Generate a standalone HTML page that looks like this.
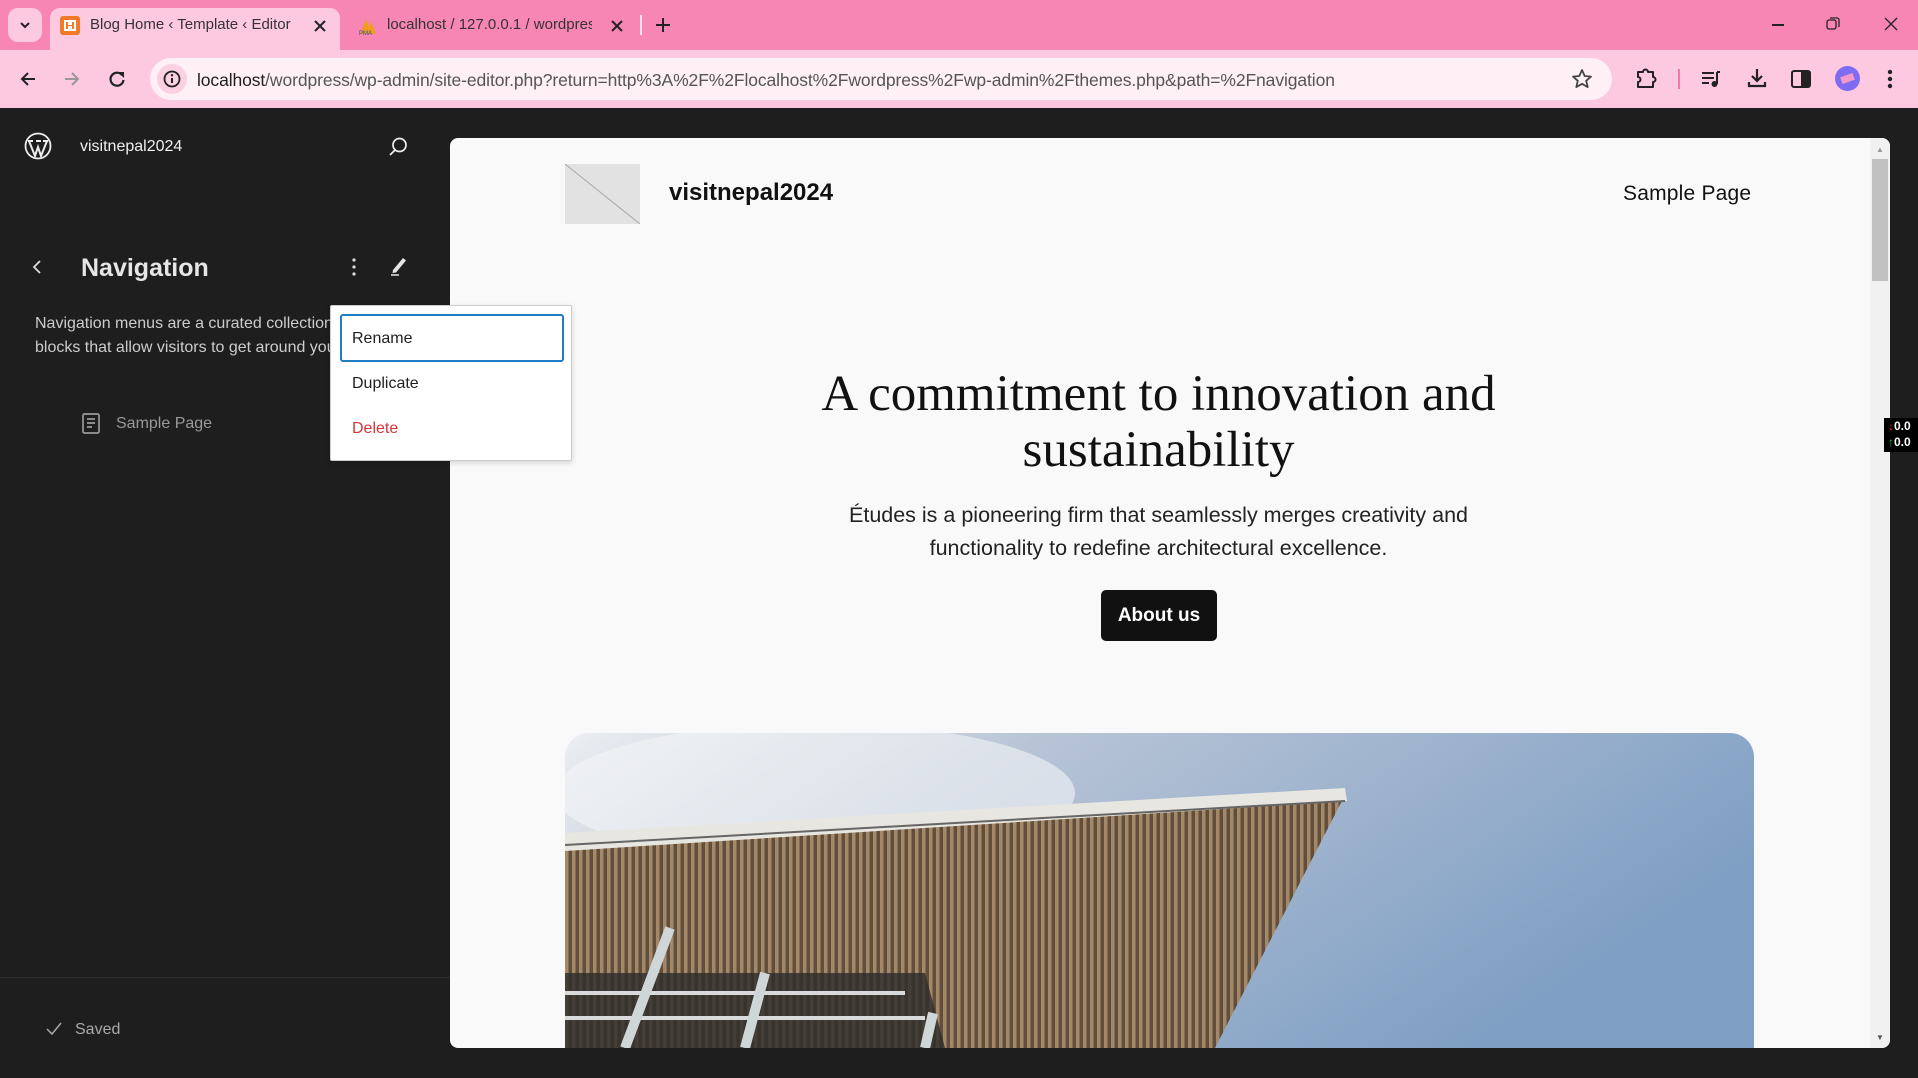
<!DOCTYPE html>
<html><head><meta charset="utf-8"><style>
*{margin:0;padding:0;box-sizing:border-box}
body{width:1918px;height:1078px;overflow:hidden;background:#1e1e1e;font-family:"Liberation Sans",sans-serif;position:relative}
.abs{position:absolute}
#strip{left:0;top:0;width:1918px;height:50px;background:#f886b5}
#toolbar{left:0;top:50px;width:1918px;height:58px;background:#fdc9e1}
.tab{top:8px;height:42px;background:#fdc9e1;border-radius:10px 10px 0 0}
.tabt{font-size:15px;color:#333;white-space:nowrap;overflow:hidden}
#addr{left:150px;top:58px;width:1462px;height:42px;background:#fff0f6;border-radius:21px}
.side{color:#e0e0e0}
#popup{left:330px;top:305px;width:242px;height:156px;background:#fff;border:1px solid #ccc;border-radius:2px;box-shadow:0 2px 6px rgba(0,0,0,.15)}
.pi{position:absolute;left:21px;font-size:16px;color:#1e1e1e}
#frame{left:450px;top:138px;width:1440px;height:910px;background:#f9f9f9;border-radius:8px;overflow:hidden}
</style></head><body>
<div id="strip" class="abs"></div>
<div class="abs" style="left:8px;top:8px;width:34px;height:34px;background:#fdc9e1;border-radius:10px"></div>
<svg class="abs" style="left:18px;top:19px" width="14" height="12"><path d="M3 4l4 4 4-4" stroke="#222" stroke-width="2" fill="none"/></svg>
<div class="abs tab" style="left:50px;width:290px"></div>
<div class="abs" style="left:60px;top:16px;width:20px;height:19px;background:#f07a2a;border-radius:3px"></div>
<svg class="abs" style="left:60px;top:16px" width="20" height="19"><path d="M5 5h4v3h2V5h4v9h-4v-3H9v3H5z" fill="none" stroke="#fff" stroke-width="2"/></svg>
<div class="abs tabt" style="left:90px;top:16px;width:205px;color:#333">Blog Home ‹ Template ‹ Editor ‹</div>
<svg class="abs" style="left:313px;top:19px" width="14" height="14"><path d="M2 2l10 10M12 2L2 12" stroke="#222" stroke-width="2"/></svg>
<svg class="abs" style="left:358px;top:16px" width="20" height="20"><path d="M2 18L8 3l3 8 2-6 5 13z" fill="#f29c1f"/><text x="1" y="19" font-size="6" fill="#2a4c9c" font-family="Liberation Sans">PMA</text></svg>
<div class="abs tabt" style="left:387px;top:16px;width:205px;color:#333">localhost / 127.0.0.1 / wordpress</div>
<svg class="abs" style="left:610px;top:19px" width="14" height="14"><path d="M2 2l10 10M12 2L2 12" stroke="#222" stroke-width="2"/></svg>
<div class="abs" style="left:640px;top:15px;width:2px;height:20px;background:#fde0ec"></div>
<svg class="abs" style="left:654px;top:16px" width="18" height="18"><path d="M9 2v14M2 9h14" stroke="#222" stroke-width="2"/></svg>
<div class="abs" style="left:1772px;top:24px;width:12px;height:1.5px;background:#222"></div>
<svg class="abs" style="left:1826px;top:17px" width="14" height="14"><rect x="1" y="3" width="9" height="9" rx="2" fill="none" stroke="#222" stroke-width="1.3"/><path d="M4 1h7a2 2 0 0 1 2 2v7" fill="none" stroke="#222" stroke-width="1.3"/></svg>
<svg class="abs" style="left:1884px;top:17px" width="14" height="14"><path d="M1 1l12 12M13 1L1 13" stroke="#222" stroke-width="1.3"/></svg>

<div id="toolbar" class="abs"></div>
<svg class="abs" style="left:18px;top:69px" width="20" height="20"><path d="M17 10H4M10 4l-6 6 6 6" stroke="#222" stroke-width="2" fill="none"/></svg>
<svg class="abs" style="left:62px;top:69px" width="20" height="20"><path d="M3 10h13M10 4l6 6-6 6" stroke="#999" stroke-width="2" fill="none"/></svg>
<svg class="abs" style="left:107px;top:69px" width="20" height="20"><path d="M15 6a6.5 6.5 0 1 0 1.5 5" stroke="#222" stroke-width="2.2" fill="none"/><path d="M11 3h6v6z" fill="#222"/></svg>
<div id="addr" class="abs"></div>
<div class="abs" style="left:157px;top:64px;width:30px;height:30px;border-radius:15px;background:#fbd0e2"></div>
<svg class="abs" style="left:163px;top:70px" width="18" height="18"><circle cx="9" cy="9" r="7.5" fill="none" stroke="#222" stroke-width="1.8"/><path d="M9 8v5" stroke="#222" stroke-width="2"/><circle cx="9" cy="5.2" r="1.2" fill="#222"/></svg>
<div class="abs" style="left:197px;top:70px;font-size:17.5px;color:#555;white-space:nowrap;letter-spacing:-0.1px"><span style="color:#1f1f1f">localhost</span>/wordpress/wp-admin/site-editor.php?return=http%3A%2F%2Flocalhost%2Fwordpress%2Fwp-admin%2Fthemes.php&amp;path=%2Fnavigation</div>
<svg class="abs" style="left:1571px;top:68px" width="22" height="22"><path d="M11 2l2.7 6 6.3.6-4.8 4.2 1.5 6.3L11 15.8 5.3 19.1l1.5-6.3L2 8.6 8.3 8z" fill="none" stroke="#444" stroke-width="1.8" stroke-linejoin="round"/></svg>
<svg class="abs" style="left:1635px;top:67px" width="22" height="22"><path d="M3 5h5a2.5 2.5 0 0 1 5 0h5v5a2.5 2.5 0 0 1 0 5v5H3v-5a2.5 2.5 0 0 0 0-5z" fill="none" stroke="#222" stroke-width="2" stroke-linejoin="round"/></svg>
<div class="abs" style="left:1678px;top:69px;width:2px;height:20px;background:#f07aa8"></div>
<svg class="abs" style="left:1700px;top:68px" width="22" height="22"><path d="M2 5h12M2 10h12M2 15h7" stroke="#222" stroke-width="2"/><path d="M17 4v12" stroke="#222" stroke-width="2"/><circle cx="14.5" cy="16" r="3" fill="#222"/><path d="M17 4h3" stroke="#222" stroke-width="2"/></svg>
<svg class="abs" style="left:1746px;top:67px" width="22" height="22"><path d="M11 2v12M6 9l5 5 5-5" stroke="#222" stroke-width="2.2" fill="none"/><path d="M3 15v4h16v-4" stroke="#222" stroke-width="2.2" fill="none"/></svg>
<svg class="abs" style="left:1790px;top:68px" width="22" height="22"><rect x="2" y="3" width="18" height="16" rx="2" fill="none" stroke="#222" stroke-width="2"/><rect x="11" y="3" width="9" height="16" fill="#222"/></svg>
<div class="abs" style="left:1835px;top:66px;width:25px;height:25px;border-radius:13px;background:#7f6cf0"></div>
<div class="abs" style="left:1841px;top:75px;width:13px;height:7px;background:#f39acb;transform:rotate(-20deg)"></div>
<svg class="abs" style="left:1886px;top:68px" width="8" height="22"><circle cx="4" cy="4" r="2.2" fill="#222"/><circle cx="4" cy="11" r="2.2" fill="#222"/><circle cx="4" cy="18" r="2.2" fill="#222"/></svg>

<svg class="abs" style="left:24px;top:132px" width="28" height="28" viewBox="0 0 28 28"><circle cx="14" cy="14" r="12.5" fill="none" stroke="#eee" stroke-width="1.8"/><path d="M5 9l6 15 3-9 3 9 6-15M4 9h5M12 9h5M19 9h5" stroke="#eee" stroke-width="2" fill="none"/></svg>
<div class="abs side" style="left:80px;top:138px;font-size:16px;color:#f0f0f0">visitnepal2024</div>
<svg class="abs" style="left:387px;top:136px" width="22" height="22"><circle cx="12.5" cy="9" r="6.5" fill="none" stroke="#eee" stroke-width="1.7"/><path d="M8 14l-5 5" stroke="#eee" stroke-width="1.8"/></svg>
<svg class="abs" style="left:30px;top:258px" width="14" height="18"><path d="M10 3L4 9l6 6" stroke="#ddd" stroke-width="1.8" fill="none"/></svg>
<div class="abs" style="left:81px;top:254px;font-size:25px;font-weight:bold;color:#e6e6e6">Navigation</div>
<svg class="abs" style="left:350px;top:256px" width="8" height="22"><circle cx="4" cy="4" r="1.6" fill="#ddd"/><circle cx="4" cy="11" r="1.6" fill="#ddd"/><circle cx="4" cy="18" r="1.6" fill="#ddd"/></svg>
<svg class="abs" style="left:388px;top:254px" width="20" height="22"><path d="M5 16l10-12 3 2.5L8 18.5 4.5 19z" fill="#e6e6e6"/><path d="M3 21h8" stroke="#e6e6e6" stroke-width="1.5"/></svg>
<div class="abs" style="left:35px;top:312px;font-size:16px;line-height:24px;color:#ccc;white-space:nowrap">Navigation menus are a curated collection of<br>blocks that allow visitors to get around your site.</div>
<svg class="abs" style="left:82px;top:413px" width="18" height="21"><rect x="1" y="1" width="16" height="19" rx="1.5" fill="none" stroke="#999" stroke-width="1.7"/><path d="M5 6h8M5 10h8M5 14h5" stroke="#999" stroke-width="1.7"/></svg>
<div class="abs" style="left:116px;top:415px;font-size:16px;color:#999">Sample Page</div>
<div class="abs" style="left:0;top:977px;width:450px;height:1px;background:#2f2f2f"></div>
<svg class="abs" style="left:45px;top:1021px" width="18" height="16"><path d="M2 8l5 5L16 2" stroke="#aaa" stroke-width="1.5" fill="none"/></svg>
<div class="abs" style="left:75px;top:1021px;font-size:16px;color:#aaa">Saved</div>

<div id="frame" class="abs">
  <div class="abs" style="left:115px;top:26px;width:75px;height:60px;background:#e2e2e2"></div>
  <svg class="abs" style="left:115px;top:26px" width="75" height="60"><path d="M0 0L75 60" stroke="#aaa" stroke-width="1"/></svg>
  <div class="abs" style="left:219px;top:41px;font-size:24px;font-weight:bold;color:#111">visitnepal2024</div>
  <div class="abs" style="left:1173px;top:44px;font-size:21px;color:#111;letter-spacing:0.2px">Sample Page</div>
  <div class="abs" style="left:200px;top:228px;width:1017px;text-align:center;font-family:'Liberation Serif',serif;font-size:51px;line-height:56px;color:#111">A commitment to innovation and<br>sustainability</div>
  <div class="abs" style="left:150px;top:361px;width:1117px;text-align:center;font-size:21.5px;line-height:33px;color:#222">Études is a pioneering firm that seamlessly merges creativity and<br>functionality to redefine architectural excellence.</div>
  <div class="abs" style="left:651px;top:452px;width:116px;height:51px;background:#111;border-radius:5px;color:#fff;font-size:19px;font-weight:bold;text-align:center;line-height:51px">About us</div>
  <svg class="abs" style="left:115px;top:595px" width="1189" height="315" viewBox="0 0 1189 315">
    <defs>
      <clipPath id="rc"><path d="M24 0H1165a24 24 0 0 1 24 24V315H0V24A24 24 0 0 1 24 0z"/></clipPath>
      <linearGradient id="sky" x1="0" y1="0" x2="1" y2="0.4"><stop offset="0" stop-color="#eceef2"/><stop offset="0.35" stop-color="#b8c4d6"/><stop offset="1" stop-color="#7f9fc4"/></linearGradient>
      <pattern id="st" width="7" height="10" patternUnits="userSpaceOnUse"><rect width="7" height="10" fill="#6e5a45"/><rect width="3.5" height="10" fill="#c9a67e"/></pattern>
    </defs>
    <g clip-path="url(#rc)">
      <rect width="1189" height="315" fill="url(#sky)"/>
      <ellipse cx="250" cy="60" rx="260" ry="70" fill="#f4f5f7" opacity=".6"/>
      <path d="M0 110L780 62 650 315H0z" fill="url(#st)"/>
      <path d="M0 110L780 62 650 315H0z" fill="#3a3028" opacity=".25"/>
      <path d="M0 100L780 55 782 68 0 118z" fill="#e8e6e0"/>
      <path d="M0 112L780 68" stroke="#666" stroke-width="2"/>
      <path d="M0 240h360l20 75H0z" fill="#2d2c2a" opacity=".8"/>
      <path d="M0 260h340M0 285h360" stroke="#d8dadb" stroke-width="4"/>
      <path d="M60 315l45-120M180 315l20-75M360 315l8-35" stroke="#cfd6d8" stroke-width="10"/>
    </g>
  </svg>
  <div class="abs" style="left:1420px;top:0;width:20px;height:910px;background:#f1f1f1"></div>
  <div class="abs" style="left:1422px;top:21px;width:16px;height:122px;background:#c1c1c1"></div>
  <div class="abs" style="left:1426px;top:7px;font-size:8px;color:#999">▲</div>
  <div class="abs" style="left:1426px;top:895px;font-size:8px;color:#555">▼</div>
</div>
<div class="abs" style="left:1884px;top:418px;width:34px;height:34px;background:#000;color:#fff;font-size:12px;font-weight:bold;line-height:16px;padding-left:4px"><span style="color:#e22">↓</span>0.0<br><span style="color:#2c2">↑</span>0.0</div>

<div id="popup" class="abs">
  <div class="abs" style="left:9px;top:8px;width:224px;height:48px;border:2px solid #1f7ec3;border-radius:3px"></div>
  <div class="pi" style="top:24px">Rename</div>
  <div class="pi" style="top:69px">Duplicate</div>
  <div class="pi" style="top:114px;color:#d63638">Delete</div>
</div>
</body></html>
